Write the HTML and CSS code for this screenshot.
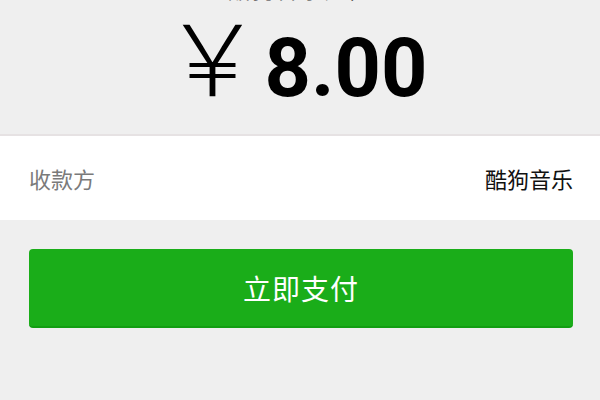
FILE: index.html
```html
<!DOCTYPE html>
<html lang="zh-CN">
<head>
<meta charset="utf-8">
<title>支付</title>
<link rel="stylesheet" href="styles.css">
</head>
<body>
  <header class="summary">
    <div class="summary-title">酷狗音乐充值</div>
    <div class="amount">
      <span class="amount-currency">￥</span>
      <span class="amount-value">8.00</span>
    </div>
  </header>

  <section class="info">
    <div class="info-row">
      <span class="info-label">收款方</span>
      <span class="info-value">酷狗音乐</span>
    </div>
  </section>

  <div class="actions">
    <button class="pay-btn" type="button">立即支付</button>
  </div>
</body>
</html>
```
FILE: styles.css
```css
html, body {
  margin: 0;
  padding: 0;
}

body {
  width: 600px;
  height: 400px;
  overflow: hidden;
  background: #efefef;
  font-family: "Noto Sans CJK SC", "Noto Sans", sans-serif;
}

/* top block: title + amount */
.summary {
  height: 134px;
  border-bottom: 2px solid #e6e2e3;
  display: flex;
  flex-direction: column;
  align-items: center;
}

.summary-title {
  margin-top: -23px;
  height: 22px;
  font-size: 22px;
  line-height: 22px;
  color: #333;
  letter-spacing: 2px;
}

.amount {
  margin-top: 9px;
  padding-right: 10px;
  display: flex;
  align-items: baseline;
  gap: 2px;
  color: #000;
}

.amount-currency {
  font-family: "Noto Sans CJK SC", sans-serif;
  font-size: 100px;
  line-height: 90px;
  font-weight: 300;
}

.amount-value {
  font-family: Roboto, "Liberation Sans", sans-serif;
  font-size: 81px;
  line-height: 90px;
  font-weight: 700;
}

/* payee row */
.info {
  background: #fff;
}

.info-row {
  height: 84px;
  padding: 0 27px 0 29px;
  display: flex;
  align-items: center;
  justify-content: space-between;
  font-size: 22px;
}

.info-label {
  color: #7a7a7a;
}

.info-value {
  color: #111;
}

/* pay button */
.actions {
  padding: 29px 27px 0 29px;
}

.pay-btn {
  display: block;
  width: 100%;
  height: 79px;
  border: 0;
  border-bottom: 2px solid #129e12;
  border-radius: 4px;
  background: #1aad19;
  color: #fff;
  font-family: "Noto Sans CJK SC", sans-serif;
  font-size: 28px;
  letter-spacing: 1px;
  padding: 0;
}
```
